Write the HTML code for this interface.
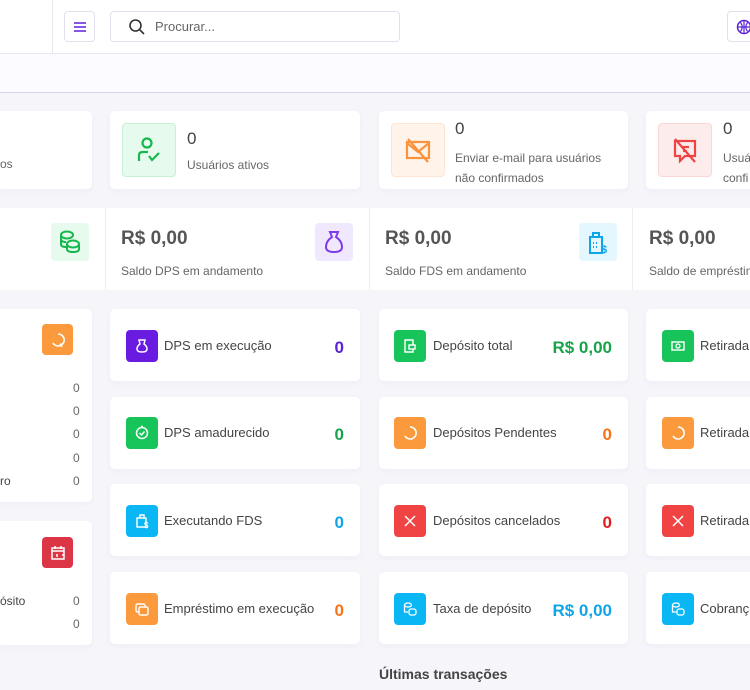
<!DOCTYPE html>
<html><head><meta charset="utf-8"><style>
*{box-sizing:border-box;margin:0;padding:0}
body{width:750px;height:690px;overflow:hidden;background:#f6f5fa;font-family:"Liberation Sans",sans-serif;position:relative;color:#444}
.a{position:absolute}
.card{position:absolute;background:#fff;border-radius:5px;box-shadow:0 2px 6px rgba(100,90,150,.05)}
.ic{position:absolute;width:32px;height:32px;border-radius:4px;display:flex;align-items:center;justify-content:center}
.lbl{position:absolute;font-size:13px;color:#444;white-space:nowrap}
.val{position:absolute;font-size:17px;font-weight:bold;text-align:right;white-space:nowrap}
.sm{font-size:12px;color:#666}
</style></head><body>
<div class="a" style="left:0;top:0;width:750px;height:54px;background:#fff;border-bottom:1px solid #e8e6ee"></div>
<div class="a" style="left:52px;top:0;width:1px;height:53px;background:#e8e6ee"></div>
<div class="a" style="left:64px;top:11px;width:31px;height:31px;border:1px solid #e2e0ea;border-radius:4px;display:flex;align-items:center;justify-content:center">
<svg width="14" height="12"><path d="M1 2H13M1 6H13M1 10H13" stroke="#5b21d6" stroke-width="1.6"/></svg></div>
<div class="a" style="left:110px;top:11px;width:290px;height:31px;border:1px solid #e2e0ea;border-radius:4px">
<svg class="a" style="left:17px;top:6px" width="18" height="18"><circle cx="7.5" cy="7.5" r="5.5" fill="none" stroke="#333" stroke-width="1.6"/><path d="M11.5 11.5L16 16" stroke="#333" stroke-width="1.6"/></svg>
<span class="a" style="left:44px;top:7px;font-size:13px;color:#666">Procurar...</span></div>
<div class="a" style="left:727px;top:11px;width:40px;height:31px;border:1px solid #e2e0ea;border-radius:4px">
<svg class="a" style="left:8px;top:7px" width="16" height="16"><circle cx="8" cy="8" r="6.5" fill="none" stroke="#5b21d6" stroke-width="1.5"/><path d="M1.5 8H14.5M8 1.5V14.5M4.5 3.5Q8 8 4.5 12.5M11.5 3.5Q8 8 11.5 12.5" fill="none" stroke="#5b21d6" stroke-width="1.2"/></svg></div>
<div class="a" style="left:0;top:54px;width:750px;height:39px;background:#fcfbff;border-bottom:1px solid #ddd3f5"></div>

<!-- row1 -->
<div class="card" style="left:-10px;top:111px;width:102px;height:78px"><span class="lbl sm" style="left:10px;top:46px">os</span></div>
<div class="card" style="left:110px;top:111px;width:250px;height:78px">
<div class="ic" style="left:12px;top:12px;width:54px;height:54px;background:#e6fbee;border:1px solid #c8f0d6"><svg width="26" height="30"><circle cx="11" cy="8" r="4.5" fill="none" stroke="#16b84e" stroke-width="2.2"/><path d="M3 26V20Q3 17 7 17H12M13 21L16 25L23 18" fill="none" stroke="#16b84e" stroke-width="2.2"/></svg></div>
<span class="a" style="left:77px;top:18px;font-size:17px">0</span><span class="lbl sm" style="left:77px;top:47px">Usuários ativos</span></div>
<div class="card" style="left:379px;top:111px;width:249px;height:78px">
<div class="ic" style="left:12px;top:12px;width:54px;height:54px;background:#fff3ea;border:1px solid #fde4d3"><svg width="28" height="28"><rect x="3" y="6" width="22" height="16" fill="none" stroke="#fb923c" stroke-width="2.2"/><path d="M3 7L14 16L25 7M4 3L24 26" fill="none" stroke="#fb923c" stroke-width="2.2"/></svg></div>
<span class="a" style="left:76px;top:8px;font-size:17px">0</span><span class="lbl sm" style="left:76px;top:37px;line-height:20px">Enviar e-mail para usuários<br>não confirmados</span></div>
<div class="card" style="left:646px;top:111px;width:120px;height:78px">
<div class="ic" style="left:12px;top:12px;width:54px;height:54px;background:#fdecec;border:1px solid #f9d7d7"><svg width="28" height="28"><path d="M4 5H24V20H14L9 25V20H4Z" fill="none" stroke="#ef4444" stroke-width="2.2"/><path d="M10 11H18M12 15H16M4 3L24 26" stroke="#ef4444" stroke-width="2.2"/></svg></div>
<span class="a" style="left:77px;top:8px;font-size:17px">0</span><span class="lbl sm" style="left:77px;top:37px;line-height:20px">Usuá<br>confi</span></div>

<!-- row2 -->
<div class="a" style="left:0;top:208px;width:750px;height:82px;background:#fff"></div>
<div class="a" style="left:105px;top:208px;width:1px;height:82px;background:#eeecf3"></div>
<div class="a" style="left:369px;top:208px;width:1px;height:82px;background:#eeecf3"></div>
<div class="a" style="left:632px;top:208px;width:1px;height:82px;background:#eeecf3"></div>
<div class="ic" style="left:51px;top:223px;width:38px;height:38px;background:#e6fbee"><svg width="24" height="26"><ellipse cx="9" cy="6" rx="6" ry="3.5" fill="none" stroke="#16b84e" stroke-width="2"/><path d="M3 6V15Q3 18 8 18M3 10Q3 13 8 13" fill="none" stroke="#16b84e" stroke-width="2"/><ellipse cx="15" cy="15" rx="6" ry="3.5" fill="none" stroke="#16b84e" stroke-width="2"/><path d="M9 15V20Q9 23 15 23Q21 23 21 20V15" fill="none" stroke="#16b84e" stroke-width="2"/></svg></div>
<span class="a" style="left:121px;top:228px;font-size:19px;font-weight:bold;color:#555">R$ 0,00</span><span class="lbl sm" style="left:121px;top:264px">Saldo DPS em andamento</span>
<div class="ic" style="left:315px;top:223px;width:38px;height:38px;background:#f0e8fe"><svg width="22" height="26"><path d="M7 3H15L13 8Q19 12 19 18Q19 23 11 23Q3 23 3 18Q3 12 9 8Z" fill="none" stroke="#7c3aed" stroke-width="2"/></svg></div>
<span class="a" style="left:385px;top:228px;font-size:19px;font-weight:bold;color:#555">R$ 0,00</span><span class="lbl sm" style="left:385px;top:264px">Saldo FDS em andamento</span>
<div class="ic" style="left:579px;top:223px;width:38px;height:38px;background:#e4f7fe"><svg width="24" height="26"><path d="M7 8V4H13V8M4 8H16V24H4Z" fill="none" stroke="#0ea5e9" stroke-width="2"/><path d="M7 14H8M10 14H11M7 18H8M10 18H11" stroke="#0ea5e9" stroke-width="2"/><text x="15" y="24" font-size="11" font-weight="bold" fill="#0ea5e9" font-family="Liberation Sans">$</text></svg></div>
<span class="a" style="left:649px;top:228px;font-size:19px;font-weight:bold;color:#555">R$ 0,00</span><span class="lbl sm" style="left:649px;top:264px">Saldo de empréstim</span>

<!-- left column cards -->
<div class="card" style="left:-10px;top:309px;width:102px;height:193px">
<div class="ic" style="left:52px;top:15px;width:31px;height:31px;background:#fb9a3c"><svg width="16" height="16"><path d="M8 2A6 6 0 1 1 3 11" fill="none" stroke="#fff" stroke-width="1.6"/><path d="M9 14L11 12L12 15" fill="none" stroke="#fff" stroke-width="1.4"/><path d="M2 8V8.1M3 5V5.1M5 3V3.1" stroke="#fff" stroke-width="1.6"/></svg></div>
<span class="lbl sm" style="left:83px;top:72px">0</span><span class="lbl sm" style="left:83px;top:95px">0</span><span class="lbl sm" style="left:83px;top:118px">0</span><span class="lbl sm" style="left:83px;top:142px">0</span>
<span class="lbl sm" style="left:10px;top:165px;color:#444">ro</span><span class="lbl sm" style="left:83px;top:165px">0</span></div>
<div class="card" style="left:-10px;top:521px;width:102px;height:124px">
<div class="ic" style="left:52px;top:16px;width:31px;height:31px;background:#dc3545"><svg width="16" height="16"><rect x="2" y="3" width="12" height="11" fill="none" stroke="#fff" stroke-width="1.5"/><path d="M2 6H14M5 1V4M11 1V4M7 9V12M13 9V11" stroke="#fff" stroke-width="1.5"/></svg></div>
<span class="lbl sm" style="left:10px;top:73px;color:#444">ósito</span><span class="lbl sm" style="left:83px;top:73px">0</span><span class="lbl sm" style="left:83px;top:96px">0</span></div>

<!-- grid -->
<div class="card" style="left:110px;top:309px;width:250px;height:72px"><div class="ic" style="left:16px;top:21px;background:#6a1be0"><svg width="16" height="16"><path d="M5 2H11L10 6Q13 8 13 11Q13 14 8 14Q3 14 3 11Q3 8 6 6Z" fill="none" stroke="#fff" stroke-width="1.5"/></svg></div><span class="lbl" style="left:54px;top:29px">DPS em execução</span><span class="val" style="right:16px;top:29px;color:#5b21d6">0</span></div>
<div class="card" style="left:110px;top:397px;width:250px;height:72px"><div class="ic" style="left:16px;top:20px;background:#16c45a"><svg width="16" height="16"><circle cx="8" cy="8" r="5.5" fill="none" stroke="#fff" stroke-width="1.5"/><path d="M5.5 8L7.5 10L10.5 6.5M7 1.5H9" fill="none" stroke="#fff" stroke-width="1.4"/></svg></div><span class="lbl" style="left:54px;top:28px">DPS amadurecido</span><span class="val" style="right:16px;top:28px;color:#16a34a">0</span></div>
<div class="card" style="left:110px;top:484px;width:250px;height:72px"><div class="ic" style="left:16px;top:21px;background:#0bb6f5"><svg width="16" height="16"><path d="M6 5V2H10V5M3 5H12V14H3Z" fill="none" stroke="#fff" stroke-width="1.4"/><text x="10" y="15" font-size="8" font-weight="bold" fill="#fff" font-family="Liberation Sans">$</text></svg></div><span class="lbl" style="left:54px;top:29px">Executando FDS</span><span class="val" style="right:16px;top:29px;color:#0ea5e9">0</span></div>
<div class="card" style="left:110px;top:572px;width:250px;height:72px"><div class="ic" style="left:16px;top:21px;background:#fb9a3c"><svg width="16" height="16"><rect x="2" y="3" width="9" height="8" rx="1.5" fill="none" stroke="#fff" stroke-width="1.4"/><rect x="5" y="6" width="9" height="8" rx="1.5" fill="#fb9a3c" stroke="#fff" stroke-width="1.4"/></svg></div><span class="lbl" style="left:54px;top:29px">Empréstimo em execução</span><span class="val" style="right:16px;top:29px;color:#f97316">0</span></div>

<div class="card" style="left:379px;top:309px;width:249px;height:72px"><div class="ic" style="left:15px;top:21px;background:#16c45a"><svg width="16" height="16"><path d="M3 2H11V14H3Z" fill="none" stroke="#fff" stroke-width="1.4"/><rect x="7" y="7" width="6" height="4" fill="#16c45a" stroke="#fff" stroke-width="1.4"/></svg></div><span class="lbl" style="left:54px;top:29px">Depósito total</span><span class="val" style="right:16px;top:29px;color:#16a34a">R$ 0,00</span></div>
<div class="card" style="left:379px;top:397px;width:249px;height:72px"><div class="ic" style="left:15px;top:20px;background:#fb9a3c"><svg width="16" height="16"><path d="M8 2A6 6 0 1 1 3 11" fill="none" stroke="#fff" stroke-width="1.6"/><path d="M2 8V8.1M3 5V5.1M5 3V3.1" stroke="#fff" stroke-width="1.6"/></svg></div><span class="lbl" style="left:54px;top:28px">Depósitos Pendentes</span><span class="val" style="right:16px;top:28px;color:#f97316">0</span></div>
<div class="card" style="left:379px;top:484px;width:249px;height:72px"><div class="ic" style="left:15px;top:21px;background:#f04343"><svg width="16" height="16"><path d="M3 3L13 13M13 3L3 13" stroke="#fff" stroke-width="1.5"/></svg></div><span class="lbl" style="left:54px;top:29px">Depósitos cancelados</span><span class="val" style="right:16px;top:29px;color:#e11d1d">0</span></div>
<div class="card" style="left:379px;top:572px;width:249px;height:72px"><div class="ic" style="left:15px;top:21px;background:#0bb6f5"><svg width="16" height="16"><ellipse cx="6" cy="4" rx="3.5" ry="2" fill="none" stroke="#fff" stroke-width="1.3"/><path d="M2.5 4V11H6" fill="none" stroke="#fff" stroke-width="1.3"/><rect x="7" y="8" width="7" height="6" rx="2" fill="none" stroke="#fff" stroke-width="1.3"/></svg></div><span class="lbl" style="left:54px;top:29px">Taxa de depósito</span><span class="val" style="right:16px;top:29px;color:#0ea5e9">R$ 0,00</span></div>

<div class="card" style="left:646px;top:309px;width:120px;height:72px"><div class="ic" style="left:16px;top:21px;background:#16c45a"><svg width="16" height="16"><rect x="2" y="4" width="12" height="8" fill="none" stroke="#fff" stroke-width="1.4"/><circle cx="8" cy="8" r="2" fill="none" stroke="#fff" stroke-width="1.3"/></svg></div><span class="lbl" style="left:54px;top:29px">Retirada</span></div>
<div class="card" style="left:646px;top:397px;width:120px;height:72px"><div class="ic" style="left:16px;top:20px;background:#fb9a3c"><svg width="16" height="16"><path d="M8 2A6 6 0 1 1 3 11" fill="none" stroke="#fff" stroke-width="1.6"/></svg></div><span class="lbl" style="left:54px;top:28px">Retirada</span></div>
<div class="card" style="left:646px;top:484px;width:120px;height:72px"><div class="ic" style="left:16px;top:21px;background:#f04343"><svg width="16" height="16"><path d="M3 3L13 13M13 3L3 13" stroke="#fff" stroke-width="1.5"/></svg></div><span class="lbl" style="left:54px;top:29px">Retirada</span></div>
<div class="card" style="left:646px;top:572px;width:120px;height:72px"><div class="ic" style="left:16px;top:21px;background:#0bb6f5"><svg width="16" height="16"><ellipse cx="6" cy="4" rx="3.5" ry="2" fill="none" stroke="#fff" stroke-width="1.3"/><path d="M2.5 4V11H6" fill="none" stroke="#fff" stroke-width="1.3"/><rect x="7" y="8" width="7" height="6" rx="2" fill="none" stroke="#fff" stroke-width="1.3"/></svg></div><span class="lbl" style="left:54px;top:29px">Cobranç</span></div>

<span class="a" style="left:379px;top:666px;font-size:14px;font-weight:bold;color:#444">Últimas transações</span>
</body></html>
